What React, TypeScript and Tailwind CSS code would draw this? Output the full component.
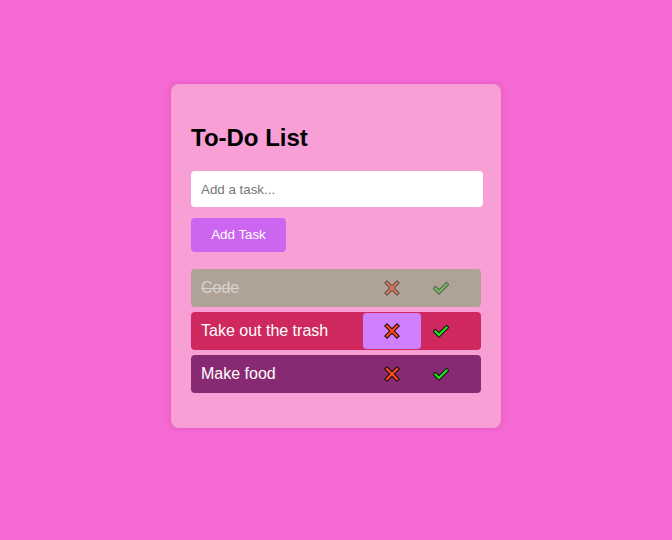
import { useState } from "react";

type Task = { id: number; text: string; done: boolean; color: string };

const initialTasks: Task[] = [
  { id: 1, text: "Code", done: true, color: "bg-[#afa397]" },
  { id: 2, text: "Take out the trash", done: false, color: "bg-[#cf285e]" },
  { id: 3, text: "Make food", done: false, color: "bg-[#872a73]" },
];

function CrossIcon() {
  return (
    <svg width="16" height="16" viewBox="0 0 16 16">
      <path d="M3 3 L13 13 M13 3 L3 13" stroke="#1a0a0a" strokeWidth="4.2" strokeLinecap="square" fill="none" />
      <path d="M3 3 L13 13 M13 3 L3 13" stroke="#ff4a1c" strokeWidth="2.2" strokeLinecap="square" fill="none" />
    </svg>
  );
}

function CheckIcon() {
  return (
    <svg width="16" height="16" viewBox="0 0 16 16">
      <path d="M2.5 8.5 L6 12 L13.5 4.5" stroke="#0d1a0d" strokeWidth="4.2" strokeLinecap="square" strokeLinejoin="miter" fill="none" />
      <path d="M2.5 8.5 L6 12 L13.5 4.5" stroke="#22e022" strokeWidth="2.2" strokeLinecap="square" strokeLinejoin="miter" fill="none" />
    </svg>
  );
}

export default function App() {
  const [tasks] = useState<Task[]>(initialTasks);

  return (
    <div className="min-h-[540px] w-full bg-[#f66ad4] pt-[84px] font-['Liberation_Sans',Arial,sans-serif]">
      <div className="mx-auto w-[330px] rounded-lg bg-[#f89fd5] px-5 pt-5 pb-[35px] shadow-[0_0_6px_rgba(190,40,150,0.35)]">
        <h2 className="mt-5 mb-5 text-2xl leading-[27px] font-bold text-black">To-Do List</h2>

        <input
          placeholder="Add a task..."
          className="block h-9 w-[292px] rounded bg-white px-[10px] text-[13.33px] text-gray-800 placeholder:text-[#757575] outline-none"
        />

        <button className="mt-[11px] h-[34px] w-[95px] rounded bg-[#cc66f0] text-[13.33px] text-white">
          Add Task
        </button>

        {/* lista */}
        <ul className="mt-[17px] flex flex-col gap-[5px]">
          {tasks.map((t) => (
            <li key={t.id} className={`flex h-[38px] items-center rounded ${t.color}`}>
              <div className={`flex h-full flex-1 items-center ${t.done ? "opacity-50" : ""}`}>
                <span className={`flex-1 pl-[10px] text-base text-white ${t.done ? "line-through text-[#ffd4ee]" : ""}`}>
                  {t.text}
                </span>
                <button
                  className={`flex h-[36px] w-[58px] items-center justify-center rounded ${
                    t.id === 2 ? "bg-[#d080ff]" : ""
                  }`}
                >
                  <CrossIcon />
                </button>
                <button className="mr-5 flex h-[36px] w-[40px] items-center justify-center">
                  <CheckIcon />
                </button>
              </div>
            </li>
          ))}
        </ul>
      </div>
    </div>
  );
}
